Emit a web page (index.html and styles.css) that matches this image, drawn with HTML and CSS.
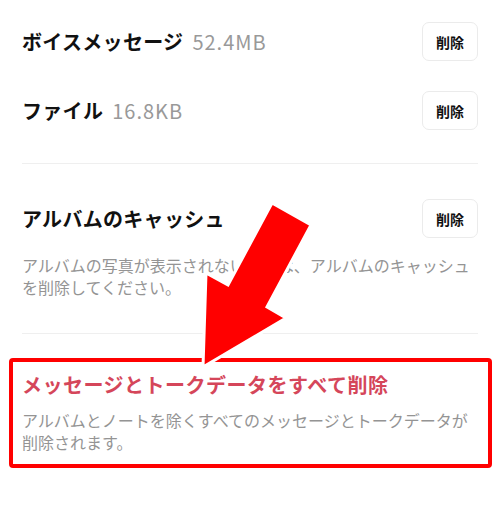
FILE: index.html
```html
<!DOCTYPE html>
<html lang="ja">
<head>
<meta charset="utf-8">
<link rel="stylesheet" href="styles.css">
</head>
<body>
<div class="page">
  <div class="list">
    <div class="row">
      <div class="title">ボイスメッセージ<span class="size">52.4MB</span></div>
      <button class="btn">削除</button>
    </div>
    <div class="row">
      <div class="title">ファイル<span class="size">16.8KB</span></div>
      <button class="btn">削除</button>
    </div>
  </div>
  <div class="divider"></div>
  <div class="cache">
    <div class="row">
      <div class="title">アルバムのキャッシュ</div>
      <button class="btn">削除</button>
    </div>
    <p class="desc">アルバムの写真が表示されない場合は、アルバムのキャッシュを削除してください。</p>
  </div>
  <div class="divider second"></div>
  <div class="danger">
    <div class="danger-title">メッセージとトークデータをすべて削除</div>
    <p class="desc">アルバムとノートを除くすべてのメッセージとトークデータが削除されます。</p>
  </div>
  <svg class="arrow" width="500" height="531" viewBox="0 0 500 531">
    <polygon points="272,203 311,225 267,307 286,318 203,367 206,273 228,285" fill="#ff0000" stroke="#ffffff" stroke-width="3" stroke-linejoin="miter"/>
  </svg>
</div>
</body>
</html>
```
FILE: styles.css
```css
html, body {
  margin: 0;
  padding: 0;
  background: #ffffff;
}
body {
  font-family: "Noto Sans CJK JP", "Noto Sans", sans-serif;
  color: #111111;
}
.page {
  position: relative;
  width: 500px;
  height: 531px;
  overflow: hidden;
}
.list {
  padding: 22px 22px 0;
  display: flex;
  flex-direction: column;
  gap: 30px;
}
.row {
  display: flex;
  align-items: center;
  justify-content: space-between;
  height: 39px;
}
.cache {
  padding: 35px 22px 0;
}
.title {
  font-size: 20px;
  font-weight: 700;
  line-height: 28px;
  letter-spacing: 0.3px;
  color: #111111;
}
.size {
  font-weight: 400;
  color: #999999;
  margin-left: 9px;
  letter-spacing: 1px;
}
.btn {
  width: 56px;
  height: 39px;
  border: 1px solid #ebebeb;
  border-radius: 7px;
  background: #ffffff;
  font-family: "Noto Sans CJK JP", sans-serif;
  font-size: 14px;
  font-weight: 700;
  color: #111111;
  padding: 0;
}
.divider {
  height: 1px;
  background: #efefef;
  margin: 33px 22px 0;
}
.divider.second {
  margin-top: 35px;
}
.desc {
  margin: 16px 0 0;
  font-size: 16px;
  line-height: 22px;
  color: #949494;
}
.danger {
  margin: 24px 8px 0 9px;
  border: 4px solid #ff0000;
  border-radius: 4px;
  padding: 9px 9px 11px 9px;
}
.danger-title {
  font-size: 20px;
  font-weight: 700;
  line-height: 28px;
  letter-spacing: 0.5px;
  color: #d5465a;
}
.danger .desc {
  margin-top: 10px;
}
.arrow {
  position: absolute;
  left: 0;
  top: 0;
  pointer-events: none;
}
```
